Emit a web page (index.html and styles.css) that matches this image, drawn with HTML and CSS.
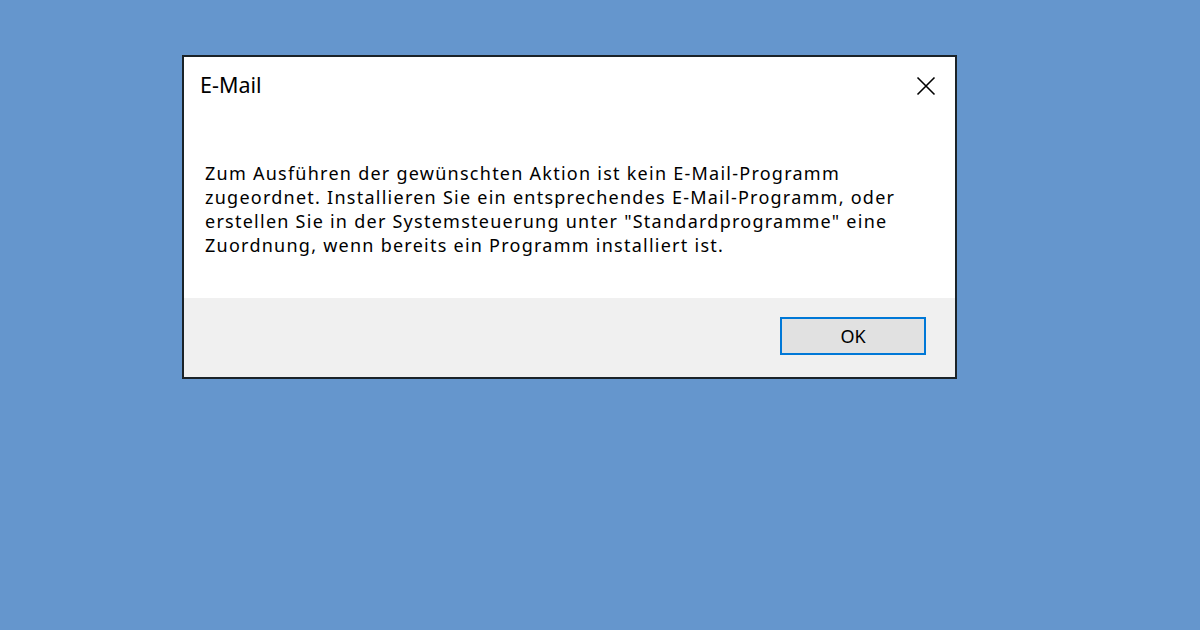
FILE: index.html
```html
<!DOCTYPE html>
<html lang="de">
<head>
<meta charset="utf-8">
<title>E-Mail</title>
<link rel="stylesheet" href="styles.css">
</head>
<body>
<div class="desktop">
  <div class="dialog">
    <div class="titlebar">
      <span class="title">E-Mail</span>
      <span class="close" aria-label="Schließen">
        <svg width="20" height="20" viewBox="0 0 20 20"><path d="M1.5 1.5 L18.5 18.5 M18.5 1.5 L1.5 18.5" stroke="#000" stroke-width="1.6" fill="none"/></svg>
      </span>
    </div>
    <div class="content">
      <p class="message">Zum Ausführen der gewünschten Aktion ist kein E-Mail-Programm<br>zugeordnet. Installieren Sie ein entsprechendes E-Mail-Programm, oder<br>erstellen Sie in der Systemsteuerung unter "Standardprogramme" eine<br>Zuordnung, wenn bereits ein Programm installiert ist.</p>
    </div>
    <div class="footer">
      <button class="btn">OK</button>
    </div>
  </div>
</div>
</body>
</html>
```
FILE: styles.css
```css
html, body {
  margin: 0;
  padding: 0;
  height: 100%;
}
body {
  background: #6596cd;
  font-family: "Noto Sans", "Open Sans", "DejaVu Sans", sans-serif;
  color: #000;
}
.desktop {
  padding: 55px 0 0 182px;
}
.dialog {
  width: 771px;
  height: 320px;
  border: 2px solid #1b2328;
  background: #fff;
  display: flex;
  flex-direction: column;
}
.titlebar {
  height: 62px;
  display: flex;
  align-items: flex-start;
  justify-content: space-between;
  padding: 0 19px 0 16px;
}
.title {
  font-size: 21.5px;
  line-height: 26px;
  margin-top: 15px;
}
.close {
  display: flex;
  margin-top: 19px;
}
.content {
  flex: 1;
  padding: 0 0 0 21px;
}
.message {
  margin: 42px 0 0 0;
  font-size: 18px;
  line-height: 24px;
  letter-spacing: 1.25px;
}
.footer {
  height: 79px;
  background: #f0f0f0;
  display: flex;
  justify-content: flex-end;
  align-items: flex-start;
  padding: 19px 29px 0 0;
  box-sizing: border-box;
}
.btn {
  width: 146px;
  height: 38px;
  border: 2px solid #0078d7;
  background: #e1e1e1;
  font-family: "Noto Sans", "Open Sans", sans-serif;
  font-size: 18px;
  color: #000;
  padding: 0;
  margin: 0;
}
```
